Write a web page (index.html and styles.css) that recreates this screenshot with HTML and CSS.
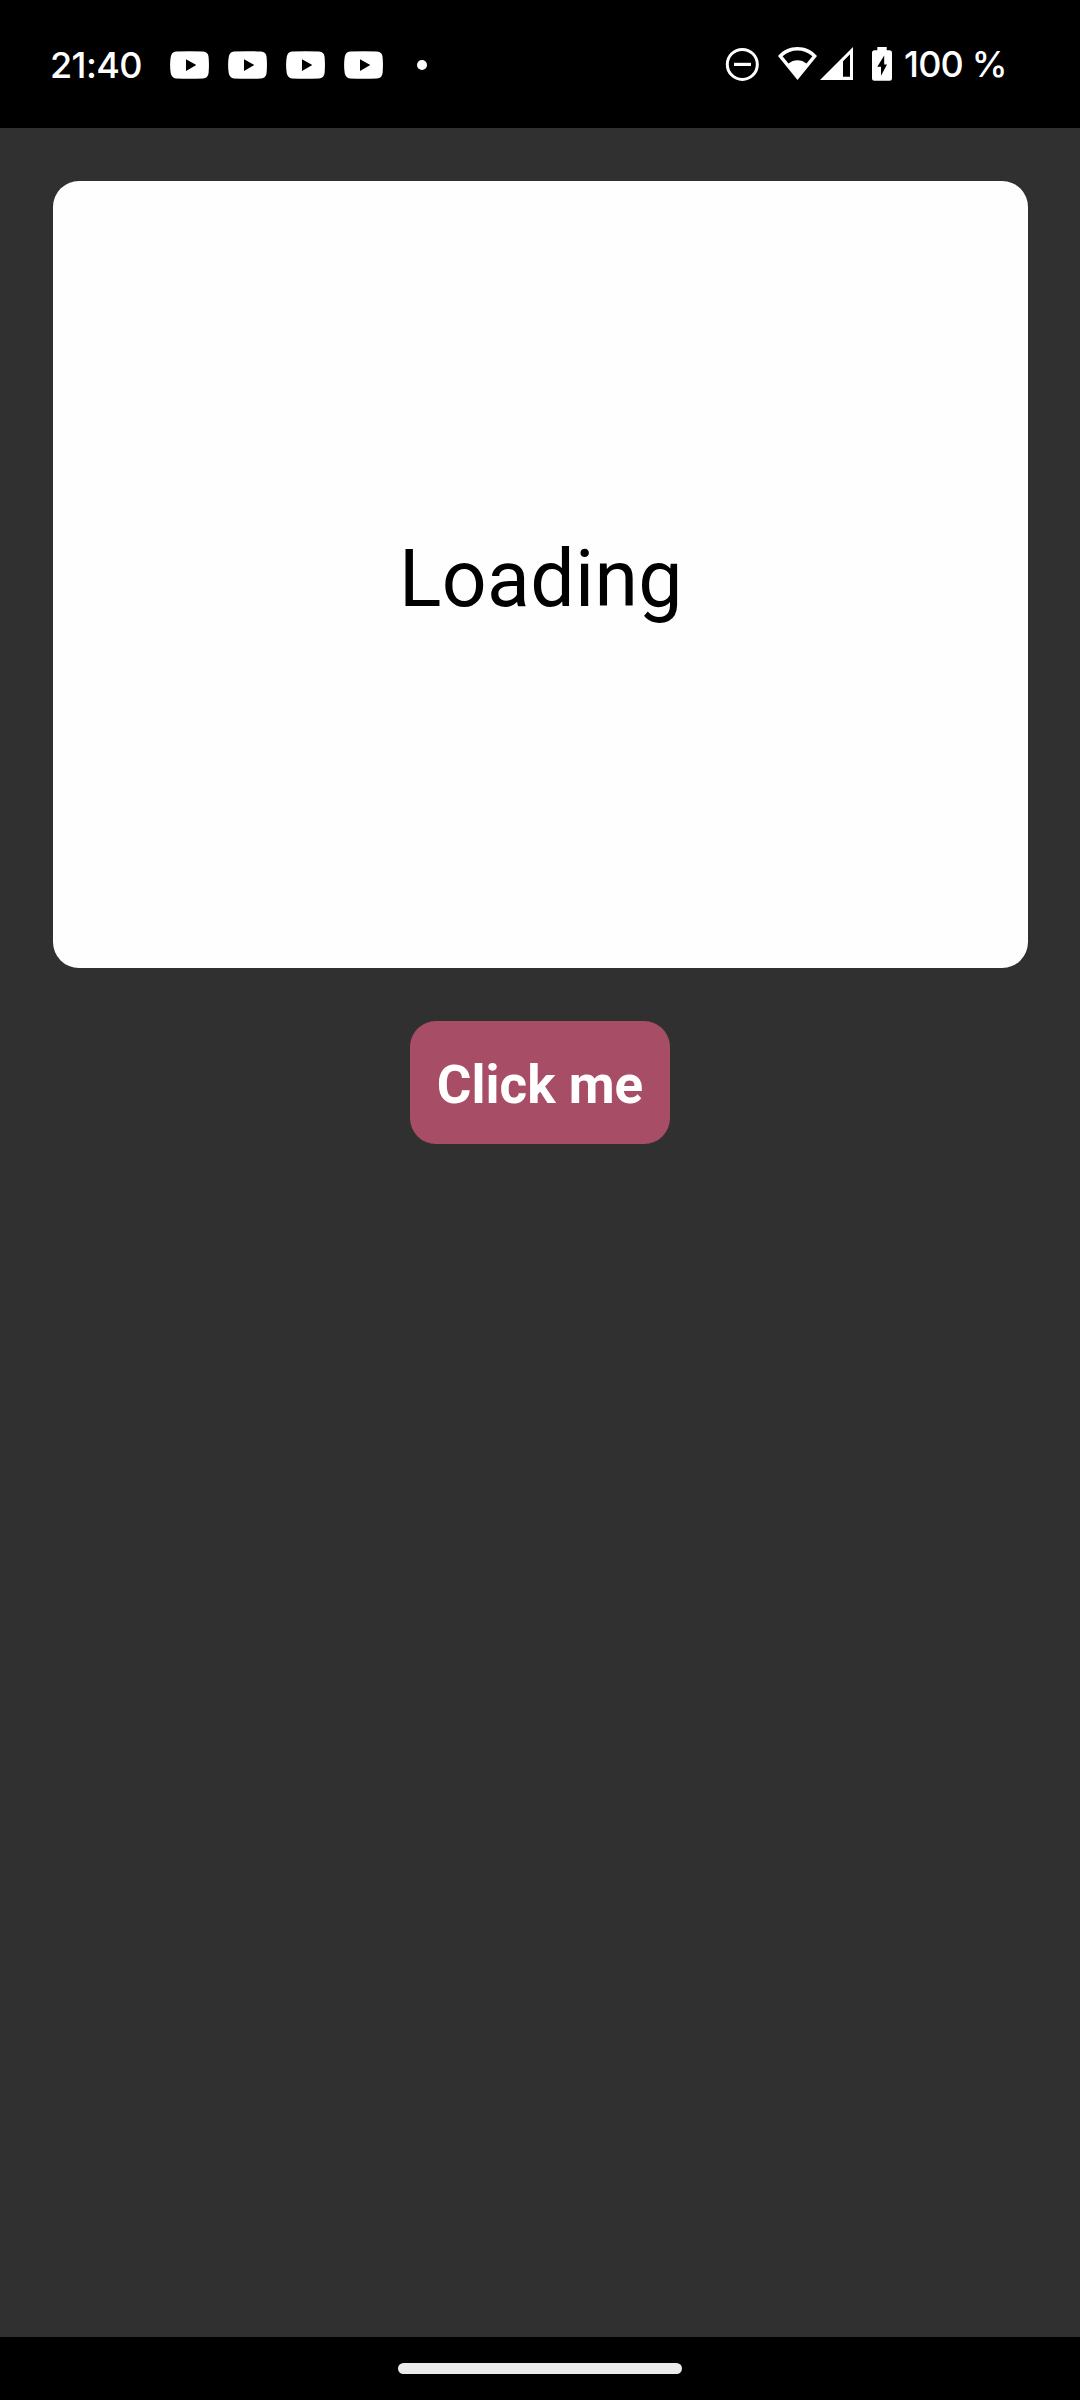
FILE: index.html
```html
<!DOCTYPE html>
<html lang="en">
<head>
<meta charset="utf-8">
<title>Loading</title>
<link rel="stylesheet" href="styles.css">
</head>
<body>
<svg class="defs" width="0" height="0" aria-hidden="true">
  <symbol id="video" viewBox="0 0 39 28">
    <path fill-rule="evenodd" d="M6 .6Q19.500-.2 33 .6Q38 .8 38.600 6Q39.300 14 38.600 22Q38 27.200 33 27.400Q19.500 28.200 6 27.400Q1.600 27 .7 22Q-.5 14 .7 6Q1.600 1 6 .6ZM16 8.200V20L26.300 14.100Z"/>
  </symbol>
</svg>
<div class="screen">
  <header class="status">
    <div class="left">
      <span class="clock">21:40</span>
      <div class="notifications">
        <svg class="video"><use href="#video"/></svg>
        <svg class="video"><use href="#video"/></svg>
        <svg class="video"><use href="#video"/></svg>
        <svg class="video"><use href="#video"/></svg>
      </div>
      <span class="dot"></span>
    </div>
    <div class="right">
      <svg class="dnd" viewBox="0 0 34 34"><circle cx="17.300" cy="17.400" r="15" fill="none" stroke="#fff" stroke-width="3"/><path d="M9 15.800H26V19H9Z"/></svg>
      <svg class="wifi" viewBox="0 0 39 34"><path fill-rule="evenodd" d="M19.500 0C12 0 5 3 0 9L19.500 33L39 9C34 3 27 0 19.500 0ZM4.600 9.200C13 1.600 26 1.600 34.400 9.200L28.500 16.500C23.500 12 15.500 12 10.500 16.500Z"/></svg>
      <svg class="signal" viewBox="0 0 33 34"><path fill-rule="evenodd" d="M33 0V33H0ZM30 7.300L23 14.300V29.800H30Z"/></svg>
      <svg class="battery" viewBox="0 0 20 34"><path fill-rule="evenodd" d="M5.300 0H14.700V3.200H17.500Q20 3.200 20 5.700V31.300Q20 33.800 17.500 33.800H2.500Q0 33.800 0 31.300V5.700Q0 3.200 2.500 3.200H5.300ZM12.200 8.400L5.300 19.800H9V28.700L15 17.400H12.200Z"/></svg>
      <span class="level">100 %</span>
    </div>
  </header>
  <main class="content">
    <div class="card">Loading</div>
    <button class="button" type="button">Click me</button>
  </main>
  <footer class="navigation"><span class="handle"></span></footer>
</div>
</body>
</html>
```
FILE: styles.css
```css
* { box-sizing: border-box; }
body { margin: 0; background: #303030; }
.defs { display: none; }
.screen {
  width: 1080px;
  height: 2400px;
  display: flex;
  flex-direction: column;
  background: #303030;
  font-family: Roboto, sans-serif;
}
.status {
  height: 128px;
  flex: none;
  display: flex;
  justify-content: space-between;
  padding: 47px 0 0 50px;
  background: #000;
  color: #fff;
  fill: #fff;
  font: 500 36px/34px Inter, sans-serif;
}
.status svg { display: block; flex: none; }
.left, .right { display: flex; align-items: center; height: 36px; }
.clock { width: 120px; white-space: nowrap; letter-spacing: -0.6px; }
.notifications { display: flex; gap: 19px; }
.video { width: 39px; height: 28px; }
.dot {
  width: 10px;
  height: 10px;
  margin-left: 34px;
  border-radius: 50%;
  background: #fff;
}
.right { align-items: flex-start; width: 355px; }
.dnd { width: 34px; height: 34px; }
.wifi { width: 39px; height: 34px; margin-left: 19px; }
.signal { width: 33px; height: 34px; margin-left: 3px; }
.battery { width: 20px; height: 34px; margin-left: 19px; }
.level { margin-left: 12px; white-space: nowrap; letter-spacing: -0.8px; }
.content {
  flex: 1;
  display: flex;
  flex-direction: column;
  align-items: center;
  gap: 53px;
  padding: 53px 52px 0 53px;
}
.card {
  width: 100%;
  height: 787px;
  display: flex;
  align-items: center;
  justify-content: center;
  padding: 8px 0 0 1px;
  border-radius: 26px;
  background: #fefefe;
  color: #000;
  font-size: 78.75px;
  letter-spacing: 0.35px;
}
.button {
  width: 260px;
  height: 123px;
  margin-right: 1px;
  padding: 4px 0 0;
  border: 0;
  border-radius: 26px;
  background: #a74e66;
  color: #fff;
  font: 700 53px Roboto, sans-serif;
  letter-spacing: 0;
  white-space: nowrap;
}
.navigation {
  height: 63px;
  flex: none;
  display: flex;
  justify-content: center;
  padding-top: 26px;
  background: #000;
}
.handle {
  width: 284px;
  height: 11px;
  border-radius: 6px;
  background: #ebebeb;
}
```
